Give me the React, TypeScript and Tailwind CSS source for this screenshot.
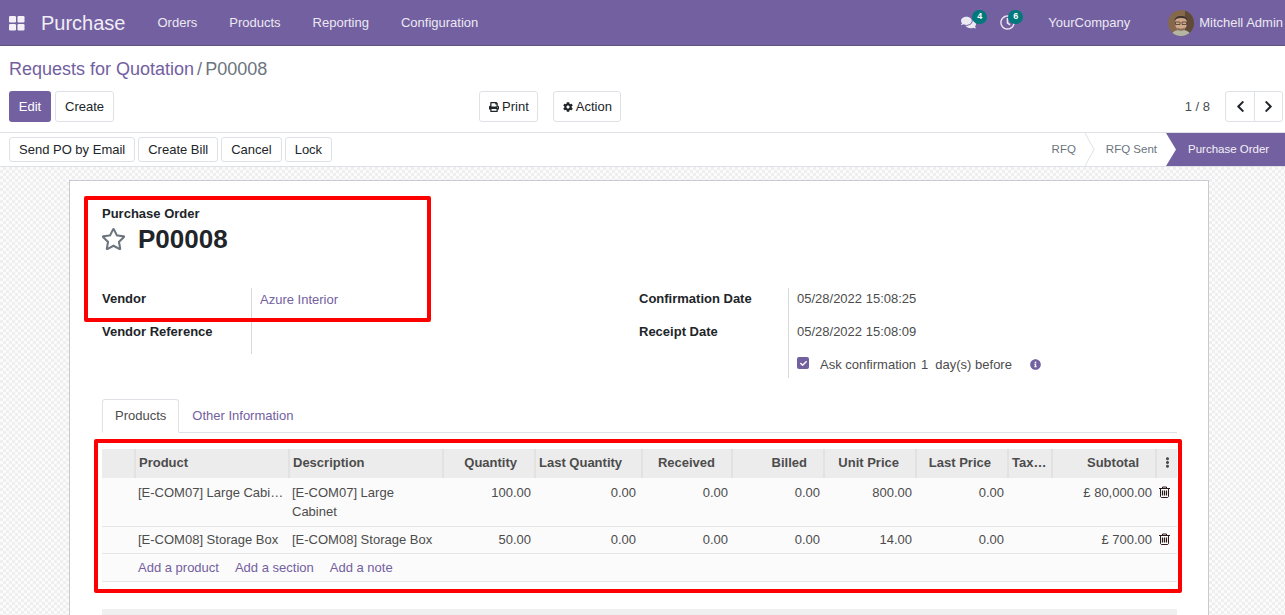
import React from 'react';
import {
  FaChevronLeft,
  FaChevronRight,
  FaCog,
  FaComments,
  FaEllipsisV,
  FaInfoCircle,
  FaPrint,
  FaRegClock,
  FaRegStar,
  FaCheck,
} from 'react-icons/fa';

const menus = ['Orders', 'Products', 'Reporting', 'Configuration'];

const lines = [
  {
    product: '[E-COM07] Large Cabinet',
    description: '[E-COM07] Large Cabinet',
    qty: '100.00',
    price: '800.00',
    subtotal: '£ 80,000.00',
    rowClass: 'h-[48px]',
    cellClass: 'pt-[5px]',
    trashClass: 'pt-[8px]',
  },
  {
    product: '[E-COM08] Storage Box',
    description: '[E-COM08] Storage Box',
    qty: '50.00',
    price: '14.00',
    subtotal: '£ 700.00',
    rowClass: 'h-[27px]',
    cellClass: 'pt-[3px]',
    trashClass: 'pt-[6px]',
  },
];

const btn = 'h-[31px] rounded-[3px] border border-[#dee2e6] bg-white px-[9px] text-[13px] text-[#212529]';
const th = 'border-l-2 border-[#e2e2e2] px-[3px] pb-[2px] font-bold text-[13px] text-[#4c4c4c]';
const num = 'pl-[3px] pr-[4px] align-top text-right';

function Badge({ n, className }: { n: number; className: string }) {
  return (
    <span className={`absolute -top-[5px] flex h-[14px] w-[15px] items-center justify-center rounded-full bg-[#00787c] text-[9px] font-bold text-white ${className}`}>
      {n}
    </span>
  );
}

function Avatar() {
  return (
    <svg viewBox="0 0 26 26" className="h-[26px] w-[26px] rounded-full">
      <rect width="26" height="26" fill="#86694c" />
      <rect x="17" width="9" height="26" fill="#5f4a38" />
      <path d="M3 26c1-5 5-6 10-6s9 1 10 6z" fill="#b4b6a4" />
      <ellipse cx="13" cy="13" rx="6" ry="7.500" fill="#d0a88c" />
      <path d="M6.500 11c0-7 13-7 13 0-1-2-3-3-6.500-3s-5.500 1-6.500 3z" fill="#3f3630" />
      <path d="M7.500 12h4.500v2.500H7.500zM14 12h4.500v2.500H14z" fill="none" stroke="#3a2c20" strokeWidth="0.7" />
      <path d="M9 17.500c2 1.500 6 1.500 8 0l-1 2.500c-1.500 1-4.500 1-6 0z" fill="#8a6a55" />
    </svg>
  );
}

function TrashIcon() {
  return (
    <svg viewBox="0 0 11 12" className="ml-[3px] h-[12px] w-[11px] fill-none stroke-[#2b1a1a]">
      <path d="M0 2.500h11M3.500 2.500V1h4v1.500" />
      <path d="M1.500 2.500v8.200l.8.800h6.400l.8-.8V2.500" />
      <path d="M3.500 4.500v5M5.500 4.500v5M7.500 4.500v5" strokeWidth="1.200" />
    </svg>
  );
}

export default function App() {
  return (
    <div className="relative h-[615px] w-full overflow-hidden bg-white font-['Liberation_Sans',Arial,sans-serif] text-[13px] text-[#212529]">
      {/* Top navbar */}
      <header className="flex h-[46px] items-center border-b border-[#5f5380] bg-[#7360a0] text-white">
        <svg viewBox="0 0 16 16" className="ml-[9px] h-[16px] w-[16px] fill-[#f3f1f7]">
          <rect x="0" y="1" width="7" height="6.500" rx="1.200" />
          <rect x="8.500" y="1" width="7" height="6.500" rx="1.200" />
          <rect x="0" y="9" width="7" height="6.500" rx="1.200" />
          <rect x="8.500" y="9" width="7" height="6.500" rx="1.200" />
        </svg>
        <span className="ml-[16px] text-[20px] text-[#f0edf5]">Purchase</span>
        <nav className="ml-[16px] flex text-[13px] text-[#ece9f3]">
          {menus.map((m) => (
            <span key={m} className="px-[16px]">
              {m}
            </span>
          ))}
        </nav>
        <div className="ml-auto mr-[2px] flex items-center text-[13px] text-[#ece9f3]">
          <span className="relative mr-[24px]">
            <FaComments className="h-[15px] w-[15px]" />
            <Badge n={4} className="left-[11px]" />
          </span>
          <span className="relative">
            <FaRegClock className="h-[15px] w-[15px]" />
            <Badge n={6} className="left-[8px]" />
          </span>
          <span className="ml-[33px]">YourCompany</span>
          <span className="ml-[38px]">
            <Avatar />
          </span>
          <span className="ml-[5px]">Mitchell Admin</span>
        </div>
      </header>

      {/* Control panel */}
      <div className="h-[87px] border-b border-[#dee2e6] px-[9px] pt-[13px]">
        <div className="h-[20px] text-[18px] leading-[20px]">
          <span className="text-[#7360a0]">Requests for Quotation</span>
          <span className="mx-[3px] text-[#6c757d]">/</span>
          <span className="text-[#6c757d]">P00008</span>
        </div>
        <div className="mt-[12px] flex items-center">
          <button className="h-[31px] w-[42px] rounded-[3px] bg-[#7360a0] text-[13px] text-white">Edit</button>
          <button className={`${btn} ml-[4px]`}>Create</button>
          <button className={`${btn} ml-[365px] flex items-center gap-[3px] pr-[8px]`}>
            <FaPrint className="h-[10px] w-[10px]" />
            Print
          </button>
          <button className={`${btn} ml-[15px] flex items-center gap-[3px] pr-[8px]`}>
            <FaCog className="h-[10px] w-[10px]" />
            Action
          </button>
          <span className="ml-auto text-[13px] text-[#4c4c4c]">1 / 8</span>
          <div className="ml-[15px] mr-[-7px] flex h-[31px] items-center rounded-[3px] border border-[#dee2e6]">
            <span className="flex h-full w-[29px] items-center justify-center border-r border-[#dee2e6]">
              <FaChevronLeft className="h-[13px] w-[13px]" />
            </span>
            <span className="flex h-full w-[27px] items-center justify-center">
              <FaChevronRight className="h-[13px] w-[13px]" />
            </span>
          </div>
        </div>
      </div>

      {/* Status bar */}
      <div className="flex h-[34px] items-center border-b border-[#dee2e6] pl-[9px]">
        <div className="flex gap-[3px]">
          {['Send PO by Email', 'Create Bill', 'Cancel', 'Lock'].map((b) => (
            <button key={b} className="h-[25px] rounded-[3px] border border-[#dee2e6] bg-white px-[9px] text-[13px] text-[#212529]">
              {b}
            </button>
          ))}
        </div>
        <div className="ml-auto flex h-full items-center text-[11.5px] text-[#6c757d]">
          <span className="pr-[9px]">RFQ</span>
          <svg viewBox="0 0 10 33" className="h-full w-[10px] fill-none stroke-[#dee2e6]">
            <path d="M0 0l9 16.500L0 33" />
          </svg>
          <span className="pl-[11px] pr-[9px]">RFQ Sent</span>
          <div className="relative flex h-full w-[119px] items-center bg-[#7360a0] pl-[22px] text-[#f3f1f7]">
            <svg viewBox="0 0 10 33" className="absolute left-0 top-0 h-full w-[10px] fill-white">
              <path d="M0 0l10 16.500L0 33z" />
            </svg>
            Purchase Order
          </div>
        </div>
      </div>

      {/* Form sheet */}
      <main className="h-[449px] bg-[#f5f5f5] bg-[conic-gradient(#efefef_25%,#fbfbfb_0_50%,#efefef_0_75%,#fbfbfb_0)] bg-[length:6px_6px] pt-[13px]">
        <div className="mx-[69px] h-[500px] w-[1140px] border border-[#c8cad3] bg-white pl-[32px] pr-[31px] pt-[25px]">
          <div className="text-[13px] font-bold leading-[16px]">Purchase Order</div>
          <div className="flex h-[34px] items-center">
            <FaRegStar className="-ml-[1px] h-[24px] w-[25px] text-[#6c757d]" />
            <h1 className="ml-[12px] text-[26px] font-bold leading-[34px]">P00008</h1>
          </div>

          <div className="mt-[32px] flex">
            <div className="flex w-[537px]">
              <div className="w-[149px] font-bold">
                <div className="h-[33px] pt-[1px]">Vendor</div>
                <div className="h-[33px] pt-[1px]">Vendor Reference</div>
              </div>
              <div className="h-[66px] border-l border-[#d9d9d9] pl-[8px] pt-[2px] text-[#7360a0]">Azure Interior</div>
            </div>
            <div className="flex">
              <div className="w-[149px] font-bold">
                <div className="h-[33px] pt-[1px]">Confirmation Date</div>
                <div className="h-[33px] pt-[1px]">Receipt Date</div>
              </div>
              <div className="h-[90px] border-l border-[#d9d9d9] pl-[8px] text-[#4c4c4c]">
                <div className="h-[33px] pt-[1px]">05/28/2022 15:08:25</div>
                <div className="h-[33px] pt-[1px]">05/28/2022 15:08:09</div>
                <div className="flex h-[24px] items-start pt-[1px]">
                  <span className="mt-[2px] flex h-[12px] w-[12px] items-center justify-center rounded-[2px] bg-[#7360a0]">
                    <FaCheck className="h-[7px] w-[7px] text-white" />
                  </span>
                  <span className="ml-[11px]">Ask confirmation</span>
                  <span className="ml-[5px]">1</span>
                  <span className="ml-[7px]">day(s) before</span>
                  <FaInfoCircle className="ml-[18px] mt-[4px] h-[11px] w-[11px] text-[#7360a0]" />
                </div>
              </div>
            </div>
          </div>

          {/* Tabs */}
          <div className="mt-[21px] flex h-[34px] border-b border-[#dee2e6]">
            <span className="h-[34px] rounded-t-[3px] border border-[#dee2e6] border-b-white bg-white px-[12px] pt-[6px] text-[#4c4c4c]">
              Products
            </span>
            <span className="px-[13px] pt-[7px] text-[#7360a0]">Other Information</span>
          </div>

          {/* Order lines */}
          <table className="mt-[16px] w-[1075px] table-fixed border-collapse text-[#4c4c4c]">
            <colgroup>
              <col className="w-[33px]" />
              <col className="w-[154px]" />
              <col className="w-[154px]" />
              <col className="w-[92px]" />
              <col className="w-[107px]" />
              <col className="w-[90px]" />
              <col className="w-[92px]" />
              <col className="w-[92px]" />
              <col className="w-[92px]" />
              <col className="w-[44px]" />
              <col className="w-[104px]" />
              <col className="w-[21px]" />
            </colgroup>
            <thead>
              <tr className="h-[29px] bg-[#ececec]">
                <th />
                <th className={`${th} text-left`}>Product</th>
                <th className={`${th} text-left`}>Description</th>
                <th className={`${th} text-right pr-[17px]`}>Quantity</th>
                <th className={`${th} text-left`}>Last Quantity</th>
                <th className={`${th} text-right pr-[16px]`}>Received</th>
                <th className={`${th} text-right pr-[16px]`}>Billed</th>
                <th className={`${th} text-right pr-[16px]`}>Unit Price</th>
                <th className={`${th} text-right pr-[16px]`}>Last Price</th>
                <th className={`${th} text-left`}>Tax…</th>
                <th className={`${th} text-right pr-[16px]`}>Subtotal</th>
                <th className={`${th} text-center`}>
                  <FaEllipsisV className="mx-auto h-[11px] w-[11px] text-[#4c4c4c]" />
                </th>
              </tr>
            </thead>
            <tbody className="bg-[#fbfbfb]">
              {lines.map((l) => (
                <tr key={l.product} className={`${l.rowClass} border-b border-[#e6e6e6]`}>
                  <td />
                  <td className={`truncate px-[3px] align-top ${l.cellClass}`}>{l.product}</td>
                  <td className={`px-[3px] align-top leading-[19px] ${l.cellClass}`}>{l.description}</td>
                  <td className={`${num} ${l.cellClass}`}>{l.qty}</td>
                  <td className={`pl-[3px] pr-[6px] align-top text-right ${l.cellClass}`}>0.00</td>
                  <td className={`${num} ${l.cellClass}`}>0.00</td>
                  <td className={`${num} ${l.cellClass}`}>0.00</td>
                  <td className={`${num} ${l.cellClass}`}>{l.price}</td>
                  <td className={`${num} ${l.cellClass}`}>0.00</td>
                  <td />
                  <td className={`${num} ${l.cellClass}`}>{l.subtotal}</td>
                  <td className={`align-top ${l.trashClass}`}>
                    <TrashIcon />
                  </td>
                </tr>
              ))}
              <tr className="h-[28px] border-b border-[#e6e6e6]">
                <td />
                <td colSpan={11} className="px-[3px] pt-[1px] text-[#7360a0]">
                  <span>Add a product</span>
                  <span className="ml-[16px]">Add a section</span>
                  <span className="ml-[16px]">Add a note</span>
                </td>
              </tr>
            </tbody>
          </table>

          <div className="mt-[27px] h-[40px] bg-[#f0f0f0]" />
        </div>
      </main>

      {/* Red annotation boxes */}
      <div className="absolute left-[84px] top-[196px] h-[126px] w-[347px] rounded-[2px] border-[4px] border-[#ff0000]" />
      <div className="absolute left-[94px] top-[439px] h-[154px] w-[1088px] rounded-[2px] border-[4px] border-[#ff0000]" />
    </div>
  );
}
